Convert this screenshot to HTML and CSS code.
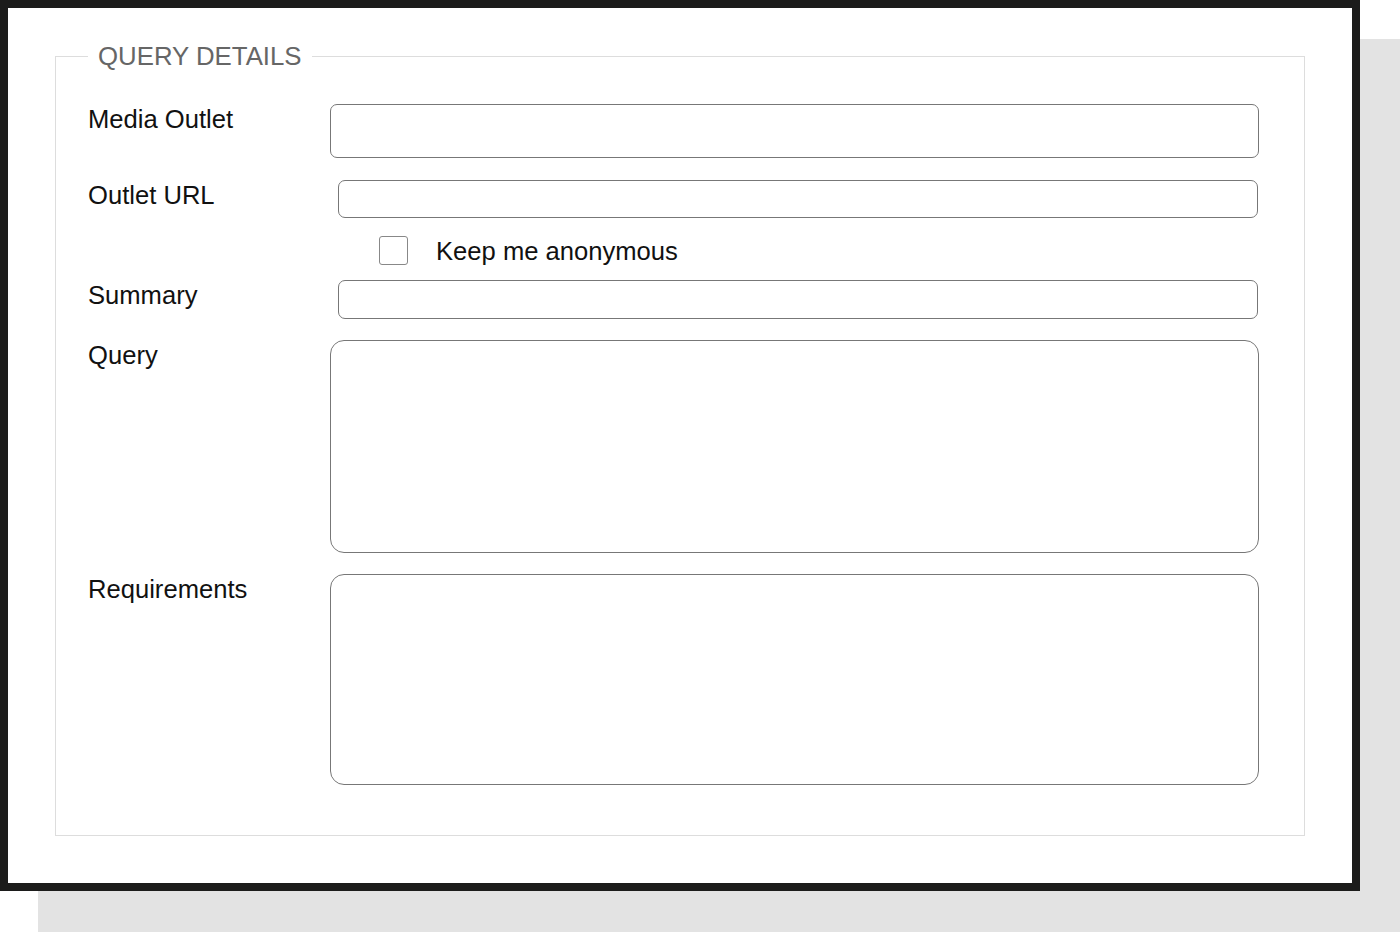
FILE: index.html
```html
<!DOCTYPE html>
<html lang="en">

<head>
    <meta charset="UTF-8">
    <meta name="viewport" content="width=device-width, initial-scale=1.0">
    <title>Query Details</title>
    <link rel="stylesheet" href="styles.css">
</head>

<body>
    <div class="window">
        <form class="query-form">
            <fieldset class="details">
                <legend>QUERY DETAILS</legend>

                <div class="row">
                    <label class="field-label" for="outlet">Media Outlet</label>
                    <input type="text" id="outlet" class="field field-outlet">
                </div>

                <div class="row row-url">
                    <label class="field-label" for="url">Outlet URL</label>
                    <input type="text" id="url" class="field field-short">
                </div>

                <div class="row row-check">
                    <input type="checkbox" id="anonymous" class="check">
                    <label for="anonymous" class="check-label">Keep me anonymous</label>
                </div>

                <div class="row row-summary">
                    <label class="field-label" for="summary">Summary</label>
                    <input type="text" id="summary" class="field field-short field-summary">
                </div>

                <div class="row row-area">
                    <label class="field-label" for="query">Query</label>
                    <textarea id="query" class="field area area-query"></textarea>
                </div>

                <div class="row row-area">
                    <label class="field-label" for="requirements">Requirements</label>
                    <textarea id="requirements" class="field area area-req"></textarea>
                </div>
            </fieldset>
        </form>
    </div>
</body>
</html>
```

FILE: styles.css
```css
body {
    margin: 0;
    min-height: 932px;
    background: #fff;
    font-family: "Liberation Sans", Arial, sans-serif;
}

.window {
    width: 1360px;
    height: 891px;
    box-sizing: border-box;
    border: 8px solid #1c1c1b;
    background: #fff;
    box-shadow: 39px 40px 0 1px #e3e3e3;
    padding: 33px 47px 0;
}

.query-form {
    margin: 0;
}

.details {
    margin: 0;
    border: 1px solid #dddddd;
    padding: 33px 45px 50px 32px;
}

.details legend {
    padding: 0 10px;
    font-size: 25.8px;
    line-height: 30px;
    color: #666;
}

.row {
    display: flex;
    align-items: flex-start;
}

.field-label {
    flex: none;
    width: 242px;
    font-size: 25.6px;
    line-height: 30px;
    color: #111;
}

.field {
    flex: 1;
    display: block;
    box-sizing: border-box;
    margin: 0;
    padding: 0 10px;
    border: 1px solid #777;
    border-radius: 7px;
    background: #fff;
    font: inherit;
    font-size: 20px;
    outline: none;
}

.field-outlet {
    height: 54px;
}

.row-url {
    margin-top: 22px;
}

.field-short {
    height: 38px;
    margin-left: 8px;
    margin-right: 1px;
}

.row-check {
    margin-top: 18px;
    padding-left: 291px;
}

.check {
    appearance: none;
    -webkit-appearance: none;
    flex: none;
    width: 29px;
    height: 29px;
    margin: 0 28px 0 0;
    border: 1px solid #888;
    border-radius: 3px;
    background: #fff;
}

.check-label {
    font-size: 25.6px;
    line-height: 30px;
    color: #111;
}

.row-summary {
    margin-top: 14px;
}

.field-summary {
    height: 39px;
}

.row-area {
    margin-top: 21px;
}

.area {
    resize: none;
    border-radius: 14px;
    padding: 10px;
}

.area-query {
    height: 213px;
}

.area-req {
    height: 211px;
}
```
